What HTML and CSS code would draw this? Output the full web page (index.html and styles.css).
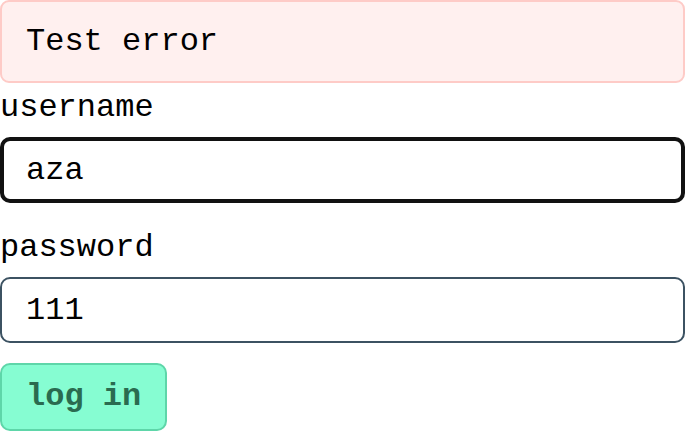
FILE: index.html
```html
<!DOCTYPE html>
<html>
<head>
<meta charset="utf-8">
<link rel="stylesheet" href="styles.css">
</head>
<body>
<form class="login">
  <div class="error">Test error</div>
  <label class="label label-first" for="u">username</label>
  <input class="field field-focus" id="u" type="text" value="aza">
  <label class="label" for="p">password</label>
  <input class="field" id="p" type="text" value="111">
  <button class="submit" type="button">log in</button>
</form>
</body>
</html>
```

FILE: styles.css
```css
html, body {
  margin: 0;
  padding: 0;
  background: #ffffff;
}

.login {
  width: 685px;
  display: flex;
  flex-direction: column;
  align-items: stretch;
  font-family: "Liberation Mono", "DejaVu Sans Mono", monospace;
  font-size: 32px;
  color: #000;
}

.error {
  box-sizing: border-box;
  height: 83px;
  padding: 0 24px;
  display: flex;
  align-items: center;
  background: #fff0ef;
  border: 2px solid #fecbc7;
  border-radius: 9px;
  line-height: 36px;
}

.label {
  display: block;
  line-height: 36px;
  margin-top: 27px;
  margin-bottom: 11px;
}

.label-first {
  margin-top: 7px;
}

.field {
  box-sizing: border-box;
  height: 66px;
  margin: 0;
  padding: 0 24px;
  font-family: inherit;
  font-size: 32px;
  color: #000;
  background: #fff;
  border: 2px solid #3c5262;
  border-radius: 10px;
  outline: none;
}

.field-focus {
  border: 4px solid #111111;
  padding: 0 22px;
}

.submit {
  align-self: flex-start;
  box-sizing: border-box;
  height: 68px;
  margin-top: 20px;
  padding: 0 24px;
  font-family: inherit;
  font-size: 32px;
  font-weight: bold;
  line-height: 36px;
  color: #2a6b50;
  background: #86fdd2;
  border: 2px solid #5ed6a9;
  border-radius: 10px;
}
```
